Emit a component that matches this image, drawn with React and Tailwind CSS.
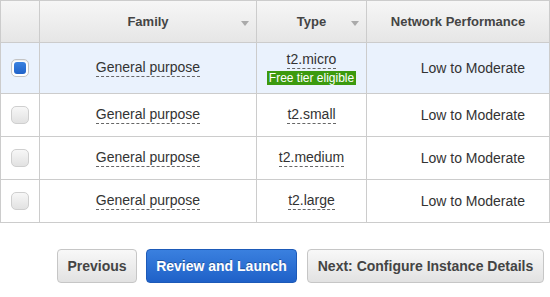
const rows = [
  { type: "t2.micro", free: true, selected: true },
  { type: "t2.small" },
  { type: "t2.medium" },
  { type: "t2.large" },
];

const cols = "grid grid-cols-[39px_217px_110px_182px]";

function SortArrow() {
  return (
    <svg width="8" height="5" viewBox="0 0 8 5" className="absolute right-[7px] top-[20px]">
      <path d="M0 0 L8 0 L4 5 Z" fill="#aaaaaa" />
    </svg>
  );
}

function Check({ on }) {
  if (on) {
    return (
      <div className="w-[18px] h-[18px] rounded-[5px] border border-[#c4c4c4] bg-white p-[2px] shadow-[inset_0_1px_1px_rgba(0,0,0,0.08)]">
        <div className="w-full h-full rounded-[3px] bg-gradient-to-b from-[#3b82e0] to-[#1f62c9]" />
      </div>
    );
  }
  return (
    <div className="w-[18px] h-[18px] rounded-[5px] border border-[#cfcfcf] bg-gradient-to-b from-[#f7f7f7] to-[#e2e2e2]" />
  );
}

function Dashed({ children }) {
  return (
    <span className="inline-block leading-[16px] pb-[1px] border-b border-dashed border-[#666]">
      {children}
    </span>
  );
}

export default function App() {
  return (
    <div
      className="w-[550px] h-[297px] bg-white text-[#333]"
      style={{ fontFamily: '"Liberation Sans", Arial, sans-serif' }}
    >
      <div className="border-t border-l border-r border-[#cccccc]">
        <div className={`${cols} h-[42px] border-b border-[#cccccc] bg-gradient-to-b from-[#f6f6f6] to-[#e6e6e6] text-[13px] font-bold text-[#444]`}>
          <div className="border-r border-[#cccccc]" />
          <div className="relative flex items-center justify-center border-r border-[#cccccc]">
            Family
            <SortArrow />
          </div>
          <div className="relative flex items-center justify-center border-r border-[#cccccc]">
            Type
            <SortArrow />
          </div>
          <div className="flex items-center justify-center">Network Performance</div>
        </div>

        {rows.map((r) => (
          <div
            key={r.type}
            className={`${cols} border-b border-[#cccccc] text-[14px] ${r.selected ? "h-[51px] bg-[#eaf2fd]" : "h-[43px]"}`}
          >
            <div className="flex items-center justify-center border-r border-[#cccccc]">
              <Check on={r.selected} />
            </div>
            <div className="flex items-center justify-center border-r border-[#cccccc]">
              <Dashed>General purpose</Dashed>
            </div>
            <div className="flex flex-col items-center justify-center border-r border-[#cccccc]">
              <Dashed>{r.type}</Dashed>
              {r.free && (
                <span className="mt-[2px] px-[2px] bg-[#3c9a0f] text-white text-[12px] leading-[14px]">
                  Free tier eligible
                </span>
              )}
            </div>
            <div className="flex items-center justify-end pr-[24px]">Low to Moderate</div>
          </div>
        ))}
      </div>

      <div className="flex justify-end gap-[9px] pr-[6px] mt-[26px] text-[14px] font-bold">
        <button className="h-[34px] w-[80px] rounded-[4px] border border-[#c6c6c6] bg-gradient-to-b from-[#f8f8f8] to-[#e2e2e2] text-[#444]">
          Previous
        </button>
        <button className="h-[34px] w-[151px] rounded-[4px] border border-[#1d5ab8] bg-gradient-to-b from-[#3a80df] to-[#1f61c8] text-white [text-shadow:0_-1px_0_rgba(0,0,0,0.3)]">
          Review and Launch
        </button>
        <button className="h-[34px] w-[237px] ml-[1px] rounded-[4px] border border-[#c6c6c6] bg-gradient-to-b from-[#f8f8f8] to-[#e2e2e2] text-[#444]">
          Next: Configure Instance Details
        </button>
      </div>
    </div>
  );
}
